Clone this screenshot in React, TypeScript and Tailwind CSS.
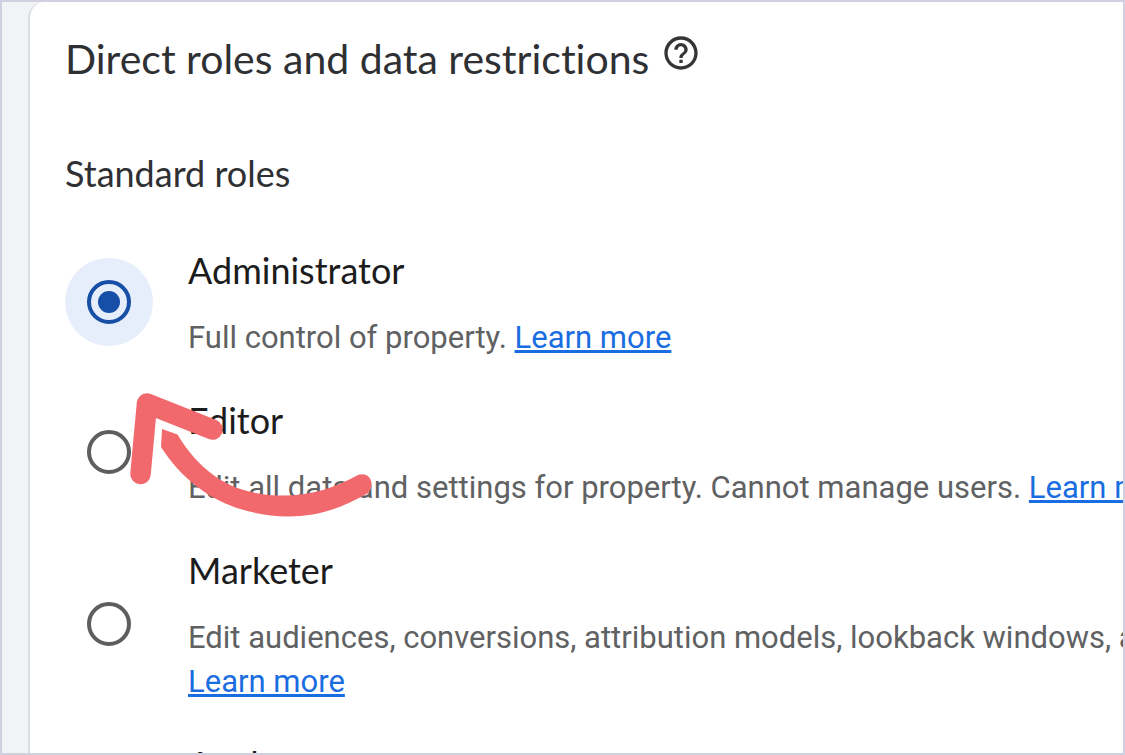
import { useState } from "react";
import type { ReactNode } from "react";
import { MdHelpOutline } from "react-icons/md";

type Role = { id: string; name: string; description: string; linkBelow?: boolean };

const roles: Role[] = [
  { id: "administrator", name: "Administrator", description: "Full control of property." },
  {
    id: "editor",
    name: "Editor",
    description: "Edit all data and settings for property. Cannot manage users.",
  },
  {
    id: "marketer",
    name: "Marketer",
    description:
      "Edit audiences, conversions, attribution models, lookback windows, and events.",
    linkBelow: true,
  },
  { id: "analyst", name: "Analyst", description: "Create and edit shared assets." },
];

function LearnMore(): ReactNode {
  return (
    <a
      href="#learn-more"
      className="text-[#1a6de0] underline decoration-[3px] underline-offset-2"
    >
      Learn more
    </a>
  );
}

function RoleOption({
  role,
  checked,
  onSelect,
}: {
  role: Role;
  checked: boolean;
  onSelect: () => void;
}) {
  return (
    <li className="flex items-center gap-[35px]">
      <span className="-my-4 flex size-22 shrink-0 items-center justify-center rounded-full has-checked:bg-[#e6eefb]">
        <input
          type="radio"
          id={role.id}
          name="role"
          checked={checked}
          onChange={onSelect}
          aria-describedby={`${role.id}-description`}
          className="grid size-11 appearance-none place-content-center rounded-full border-4 border-[#5e5e5e] before:size-[22px] before:rounded-full checked:border-[#174ea6] checked:before:bg-[#174ea6]"
        />
      </span>
      <div className="pt-1 whitespace-nowrap">
        <label
          htmlFor={role.id}
          className="block font-['Lato',sans-serif] text-[36px] leading-11 text-[#1c1c1d] [font-variant-ligatures:none]"
        >
          {role.name}
        </label>
        <p
          id={`${role.id}-description`}
          className="mt-6 text-[31px] leading-11 text-[#606163]"
        >
          {role.description} {role.linkBelow && <br />}
          <LearnMore />
        </p>
      </div>
    </li>
  );
}

function PointerArrow() {
  return (
    <svg
      aria-hidden="true"
      viewBox="128 390 248 130"
      className="pointer-events-none absolute top-[388px] left-[126px] h-[130px] w-[248px]"
    >
      <path
        d="M212.500 429.5 L147 403.5 L140.500 474"
        fill="none"
        stroke="#f2696d"
        strokeWidth="20.5"
        strokeLinecap="round"
        strokeLinejoin="round"
      />
      <path
        d="M162 429 L177.5 434.5 C205 480 240 495.500 284 495.500 C312 495.500 335 487.500 358 475 C370 471 376 485 368 493 C341 509 316 516.500 288 516.500 C230 515.500 188 489 161 447 Z"
        fill="#f2696d"
      />
    </svg>
  );
}

export default function App() {
  const [selected, setSelected] = useState("administrator");

  return (
    <div className="relative h-screen overflow-hidden border-2 border-[#d0d0e0] bg-[#f1f3f4] pl-[26px] font-['Roboto',sans-serif]">
      <main className="min-h-full rounded-tl-[16px] border-l-2 border-[#dadce4] bg-white pt-[31px] pl-[35px]">
        <div className="flex items-start gap-3 whitespace-nowrap">
          <h1 className="font-['Lato',sans-serif] text-[41px] leading-[52px] text-[#2f3033] [font-variant-ligatures:none]">
            Direct roles and data restrictions
          </h1>
          <button type="button" aria-label="Help" className="text-[#343537]">
            <MdHelpOutline className="size-10" />
          </button>
        </div>
        <fieldset className="mt-[66px]">
          <legend className="font-['Lato',sans-serif] text-[36px] leading-11 text-[#2f3033]">
            Standard roles
          </legend>
          <ul className="mt-[49px] flex flex-col gap-[34px]">
            {roles.map((role) => (
              <RoleOption
                key={role.id}
                role={role}
                checked={selected === role.id}
                onSelect={() => setSelected(role.id)}
              />
            ))}
          </ul>
        </fieldset>
      </main>
      <PointerArrow />
    </div>
  );
}
